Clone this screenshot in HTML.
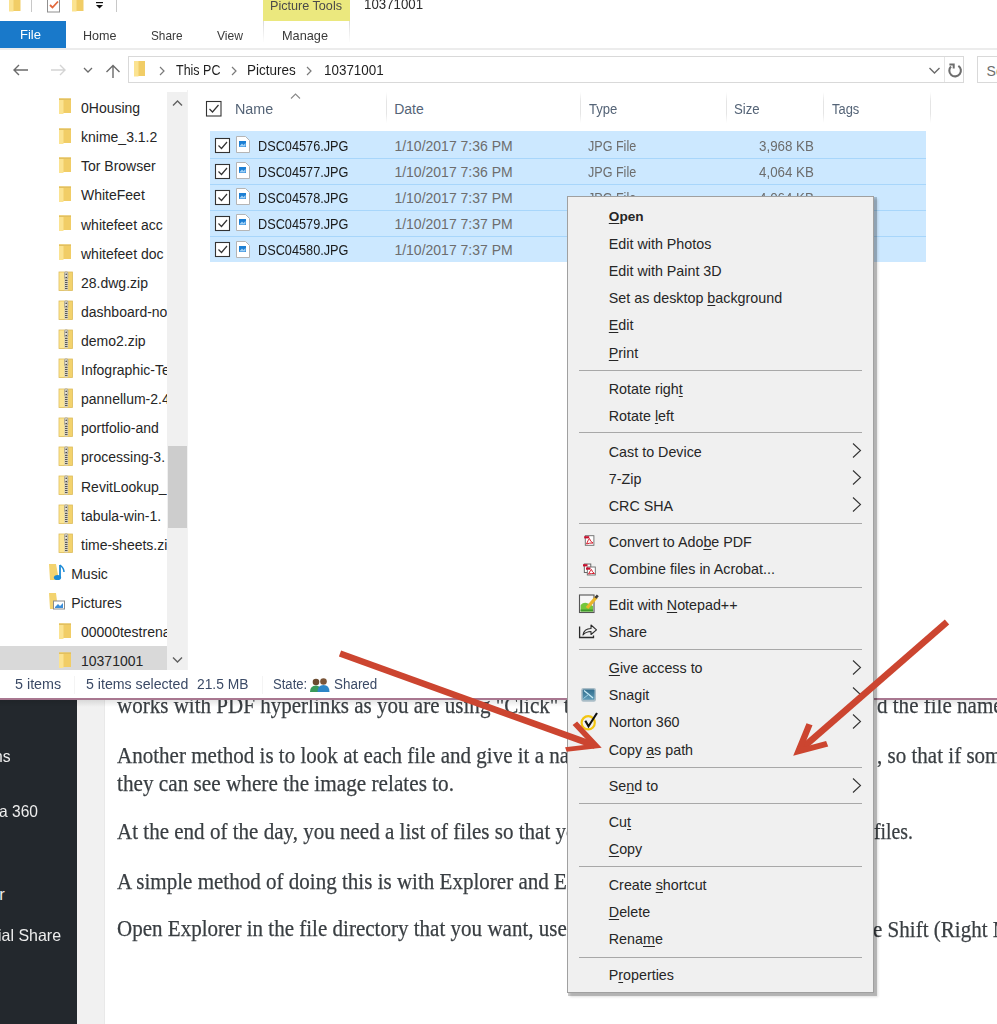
<!DOCTYPE html>
<html><head><meta charset="utf-8"><style>
html,body{margin:0;padding:0;width:997px;height:1024px;overflow:hidden;background:#fff;}
body{position:relative;font-family:"Liberation Sans", sans-serif;}
.r{position:absolute;display:block;}
.t{position:absolute;white-space:nowrap;}
u{text-decoration:underline;text-underline-offset:2px;text-decoration-thickness:1px;}
</style></head><body>
<div class="r" style="left:77px;top:690px;width:28px;height:334px;background:#f1f1f1;"></div>
<div class="r" style="left:104px;top:690px;width:1px;height:334px;background:#e9e9e9;"></div>
<div class="r" style="left:0px;top:690px;width:77px;height:334px;background:#23282d;"></div>
<div class="t" style="left:-6.50px;top:747.73px;font-size:16.5px;line-height:16.5px;color:#eeeeee;transform:scaleX(0.9500);transform-origin:0 0;">ns</div>
<div class="t" style="left:-1.50px;top:802.53px;font-size:16.5px;line-height:16.5px;color:#eeeeee;transform:scaleX(0.9446);transform-origin:0 0;">a 360</div>
<div class="t" style="left:-0.80px;top:885.53px;font-size:16.5px;line-height:16.5px;color:#eeeeee;">r</div>
<div class="t" style="left:-2.00px;top:926.73px;font-size:16.5px;line-height:16.5px;color:#eeeeee;transform:scaleX(0.9675);transform-origin:0 0;">ial Share</div>
<div class="t" style="left:117.00px;top:694.66px;font-size:22.5px;line-height:22.5px;color:#393e42;font-family:'Liberation Serif', serif;transform:scaleX(0.9350);transform-origin:0 0;-webkit-text-stroke:0.25px #393e42;">works with PDF hyperlinks as you are using "Click" to open</div>
<div class="t" style="left:876.50px;top:694.66px;font-size:22.5px;line-height:22.5px;color:#393e42;font-family:'Liberation Serif', serif;transform:scaleX(0.9350);transform-origin:0 0;-webkit-text-stroke:0.25px #393e42;">d the file name</div>
<div class="t" style="left:117.00px;top:744.66px;font-size:22.5px;line-height:22.5px;color:#393e42;font-family:'Liberation Serif', serif;transform:scaleX(0.9350);transform-origin:0 0;-webkit-text-stroke:0.25px #393e42;">Another method is to look at each file and give it a name that</div>
<div class="t" style="left:876.90px;top:744.66px;font-size:22.5px;line-height:22.5px;color:#393e42;font-family:'Liberation Serif', serif;transform:scaleX(0.9350);transform-origin:0 0;-webkit-text-stroke:0.25px #393e42;">, so that if someone</div>
<div class="t" style="left:117.00px;top:773.26px;font-size:22.5px;line-height:22.5px;color:#393e42;font-family:'Liberation Serif', serif;transform:scaleX(0.9431);transform-origin:0 0;-webkit-text-stroke:0.25px #393e42;">they can see where the image relates to.</div>
<div class="t" style="left:117.00px;top:821.46px;font-size:22.5px;line-height:22.5px;color:#393e42;font-family:'Liberation Serif', serif;transform:scaleX(0.9350);transform-origin:0 0;-webkit-text-stroke:0.25px #393e42;">At the end of the day, you need a list of files so that you can</div>
<div class="t" style="left:874.00px;top:821.46px;font-size:22.5px;line-height:22.5px;color:#393e42;font-family:'Liberation Serif', serif;transform:scaleX(0.8791);transform-origin:0 0;-webkit-text-stroke:0.25px #393e42;">files.</div>
<div class="t" style="left:117.00px;top:871.06px;font-size:22.5px;line-height:22.5px;color:#393e42;font-family:'Liberation Serif', serif;transform:scaleX(0.9350);transform-origin:0 0;-webkit-text-stroke:0.25px #393e42;">A simple method of doing this is with Explorer and Excel.</div>
<div class="t" style="left:117.00px;top:917.76px;font-size:22.5px;line-height:22.5px;color:#393e42;font-family:'Liberation Serif', serif;transform:scaleX(0.9350);transform-origin:0 0;-webkit-text-stroke:0.25px #393e42;">Open Explorer in the file directory that you want, use Ctrl</div>
<div class="t" style="left:873.20px;top:918.56px;font-size:22.5px;line-height:22.5px;color:#393e42;font-family:'Liberation Serif', serif;transform:scaleX(0.9350);transform-origin:0 0;-webkit-text-stroke:0.25px #393e42;">e Shift (Right Mouse</div>
<div class="r" style="left:0px;top:0px;width:997px;height:698px;background:#fff;"></div>
<div class="r" style="left:0px;top:699.5px;width:997px;height:7px;background:linear-gradient(rgba(0,0,0,0.10),rgba(0,0,0,0));"></div>
<div class="r" style="left:0px;top:698px;width:997px;height:1.6px;background:#a87790;"></div>
<svg class="r" style="left:8px;top:-4px;" width="14" height="16" viewBox="0 0 14 16"><rect x="1" y="0" width="11.5" height="15" fill="#f1cd66"/><rect x="1" y="0" width="4.5" height="15.5" fill="#fbe391"/></svg>
<div class="r" style="left:31px;top:0px;width:1px;height:12px;background:#c8c8c8;"></div>
<svg class="r" style="left:46px;top:-2px;" width="16" height="16" viewBox="0 0 16 16"><rect x="1.5" y="0.5" width="12" height="13.5" fill="#fff" stroke="#8f8f8f" stroke-width="1"/><path d="M4 7 L6.5 9.5 L12 3.5" fill="none" stroke="#e2683c" stroke-width="1.8"/></svg>
<svg class="r" style="left:71px;top:-4px;" width="14" height="16" viewBox="0 0 14 16"><rect x="1" y="0" width="11.5" height="15" fill="#f1cd66"/><rect x="1" y="0" width="4.5" height="15.5" fill="#fbe391"/></svg>
<svg class="r" style="left:95px;top:1px;" width="10" height="9" viewBox="0 0 10 9"><rect x="1" y="1" width="7" height="1.2" fill="#111"/><path d="M1 4 L8 4 L4.5 7.5 Z" fill="#111"/></svg>
<div class="r" style="left:116px;top:0px;width:1px;height:12px;background:#c8c8c8;"></div>
<div class="r" style="left:263px;top:0px;width:87px;height:21px;background:#ebe87e;"></div>
<div class="t" style="left:269.50px;top:0.42px;font-size:12.5px;line-height:12.5px;color:#4a4a4a;transform:scaleX(1.0094);transform-origin:0 0;">Picture Tools</div>
<div class="t" style="left:363.50px;top:-3.25px;font-size:14px;line-height:14px;color:#2b2b2b;transform:scaleX(0.9473);transform-origin:0 0;">10371001</div>
<div class="r" style="left:0px;top:21px;width:66px;height:28px;background:#1979ca;"></div>
<div class="t" style="left:19.50px;top:29.42px;font-size:12.5px;line-height:12.5px;color:#ffffff;transform:scaleX(1.0427);transform-origin:0 0;">File</div>
<div class="t" style="left:82.70px;top:29.00px;font-size:13px;line-height:13px;color:#3a3a3a;transform:scaleX(0.9661);transform-origin:0 0;">Home</div>
<div class="t" style="left:150.90px;top:29.00px;font-size:13px;line-height:13px;color:#3a3a3a;transform:scaleX(0.9081);transform-origin:0 0;">Share</div>
<div class="t" style="left:217.00px;top:29.00px;font-size:13px;line-height:13px;color:#3a3a3a;transform:scaleX(0.9305);transform-origin:0 0;">View</div>
<div class="r" style="left:263px;top:21px;width:1px;height:22px;background:linear-gradient(#dadada,#fff);"></div>
<div class="r" style="left:349px;top:21px;width:1px;height:22px;background:linear-gradient(#dadada,#fff);"></div>
<div class="t" style="left:282.00px;top:29.00px;font-size:13px;line-height:13px;color:#3a3a3a;transform:scaleX(0.9793);transform-origin:0 0;">Manage</div>
<div class="r" style="left:0px;top:48px;width:997px;height:2px;background:#ececec;"></div>
<svg class="r" style="left:12px;top:63px;" width="18" height="14" viewBox="0 0 18 14"><path d="M2 7 L16 7 M7 2 L2 7 L7 12" fill="none" stroke="#6b6b6b" stroke-width="1.4"/></svg>
<svg class="r" style="left:49px;top:63px;" width="18" height="14" viewBox="0 0 18 14"><path d="M2 7 L16 7 M11 2 L16 7 L11 12" fill="none" stroke="#d4d4d4" stroke-width="1.4"/></svg>
<svg class="r" style="left:83px;top:67px;" width="10" height="7" viewBox="0 0 10 7"><path d="M1 1 L5 5 L9 1" fill="none" stroke="#6b6b6b" stroke-width="1.3"/></svg>
<svg class="r" style="left:105px;top:64px;" width="16" height="15" viewBox="0 0 16 15"><path d="M8 14 L8 1.5 M1.5 8 L8 1.5 L14.5 8" fill="none" stroke="#6b6b6b" stroke-width="1.4"/></svg>
<div class="r" style="left:128px;top:56px;width:836px;height:27px;background:#fff;box-sizing:border-box;border:1px solid #d9d9d9;"></div>
<div class="r" style="left:944px;top:57px;width:1px;height:25px;background:#e5e5e5;"></div>
<svg class="r" style="left:133px;top:60px;" width="14" height="17" viewBox="0 0 14 17"><rect x="1" y="1" width="11" height="15" fill="#f1cd66"/><rect x="1" y="1" width="4.5" height="15.5" fill="#fbe391"/></svg>
<svg class="r" style="left:159px;top:66px;" width="7" height="10" viewBox="0 0 7 10"><path d="M1 1 L5 5.0 L1 9" fill="none" stroke="#7a7a7a" stroke-width="1.2"/></svg>
<div class="t" style="left:175.80px;top:63.15px;font-size:14px;line-height:14px;color:#1e1e1e;transform:scaleX(0.8918);transform-origin:0 0;">This PC</div>
<svg class="r" style="left:231px;top:66px;" width="7" height="10" viewBox="0 0 7 10"><path d="M1 1 L5 5.0 L1 9" fill="none" stroke="#7a7a7a" stroke-width="1.2"/></svg>
<div class="t" style="left:247.30px;top:63.15px;font-size:14px;line-height:14px;color:#1e1e1e;transform:scaleX(0.9630);transform-origin:0 0;">Pictures</div>
<svg class="r" style="left:306px;top:66px;" width="7" height="10" viewBox="0 0 7 10"><path d="M1 1 L5 5.0 L1 9" fill="none" stroke="#7a7a7a" stroke-width="1.2"/></svg>
<div class="t" style="left:323.50px;top:63.15px;font-size:14px;line-height:14px;color:#1e1e1e;transform:scaleX(0.9585);transform-origin:0 0;">10371001</div>
<svg class="r" style="left:928px;top:66px;" width="13" height="10" viewBox="0 0 13 10"><path d="M1.5 2 L6.5 7 L11.5 2" fill="none" stroke="#6b6b6b" stroke-width="1.4"/></svg>
<svg class="r" style="left:946px;top:62px;" width="18" height="18" viewBox="0 0 18 18"><path d="M12.34 3.79 A5.8 5.8 0 1 1 5.0 4.5" fill="none" stroke="#6e6e6e" stroke-width="2.1"/><path d="M3.4 2.6 L7.7 2.6 L7.7 6.6" fill="none" stroke="#6e6e6e" stroke-width="2"/></svg>
<div class="r" style="left:977px;top:56px;width:30px;height:27px;background:#fff;box-sizing:border-box;border:1px solid #d9d9d9;"></div>
<div class="t" style="left:986.60px;top:63.65px;font-size:14px;line-height:14px;color:#6d6d6d;">Se</div>
<div class="r" style="left:0px;top:646px;width:167px;height:24px;background:#d9d9d9;"></div>
<div class="r" style="left:0;top:90px;width:167px;height:580px;overflow:hidden">
<svg class="r" style="left:58px;top:8.400000000000006px;" width="14" height="18" viewBox="0 0 14 18"><rect x="1" y="0.5" width="12" height="14.5" fill="#f1cd66"/><rect x="1" y="0.5" width="4.5" height="15.5" fill="#fbe391"/><rect x="1" y="0.5" width="12" height="1.5" fill="#e2c060"/></svg>
<div class="t" style="left:81.00px;top:11.05px;font-size:14px;line-height:14px;color:#262626;">0Housing</div>
<svg class="r" style="left:58px;top:37.52000000000001px;" width="14" height="18" viewBox="0 0 14 18"><rect x="1" y="0.5" width="12" height="14.5" fill="#f1cd66"/><rect x="1" y="0.5" width="4.5" height="15.5" fill="#fbe391"/><rect x="1" y="0.5" width="12" height="1.5" fill="#e2c060"/></svg>
<div class="t" style="left:81.00px;top:40.17px;font-size:14px;line-height:14px;color:#262626;">knime_3.1.2</div>
<svg class="r" style="left:58px;top:66.64000000000001px;" width="14" height="18" viewBox="0 0 14 18"><rect x="1" y="0.5" width="12" height="14.5" fill="#f1cd66"/><rect x="1" y="0.5" width="4.5" height="15.5" fill="#fbe391"/><rect x="1" y="0.5" width="12" height="1.5" fill="#e2c060"/></svg>
<div class="t" style="left:81.00px;top:69.29px;font-size:14px;line-height:14px;color:#262626;">Tor Browser</div>
<svg class="r" style="left:58px;top:95.75999999999999px;" width="14" height="18" viewBox="0 0 14 18"><rect x="1" y="0.5" width="12" height="14.5" fill="#f1cd66"/><rect x="1" y="0.5" width="4.5" height="15.5" fill="#fbe391"/><rect x="1" y="0.5" width="12" height="1.5" fill="#e2c060"/></svg>
<div class="t" style="left:81.00px;top:98.41px;font-size:14px;line-height:14px;color:#262626;">WhiteFeet</div>
<svg class="r" style="left:58px;top:124.88px;" width="14" height="18" viewBox="0 0 14 18"><rect x="1" y="0.5" width="12" height="14.5" fill="#f1cd66"/><rect x="1" y="0.5" width="4.5" height="15.5" fill="#fbe391"/><rect x="1" y="0.5" width="12" height="1.5" fill="#e2c060"/></svg>
<div class="t" style="left:81.00px;top:127.53px;font-size:14px;line-height:14px;color:#262626;">whitefeet acc</div>
<svg class="r" style="left:58px;top:154.0px;" width="14" height="18" viewBox="0 0 14 18"><rect x="1" y="0.5" width="12" height="14.5" fill="#f1cd66"/><rect x="1" y="0.5" width="4.5" height="15.5" fill="#fbe391"/><rect x="1" y="0.5" width="12" height="1.5" fill="#e2c060"/></svg>
<div class="t" style="left:81.00px;top:156.65px;font-size:14px;line-height:14px;color:#262626;">whitefeet doc</div>
<svg class="r" style="left:58px;top:181.12px;" width="16" height="21" viewBox="0 0 16 21"><rect x="1" y="1" width="13.5" height="18.5" fill="#f3d26c" stroke="#dcbc5c" stroke-width="0.8"/><rect x="1.5" y="1.5" width="5" height="17.5" fill="#fbe594"/><rect x="6.3" y="0.8" width="3.8" height="18.5" fill="#d8d2bf"/><rect x="6.6" y="1" width="3.2" height="7" rx="1" fill="#e8e4d6" stroke="#8a8578" stroke-width="0.6"/><circle cx="8.2" cy="3.3" r="0.8" fill="#333"/><circle cx="8.2" cy="6.5" r="0.8" fill="#333"/><path d="M7 9.5h2.5M7 11.5h2.5M7 13.5h2.5M7 15.5h2.5M7 17.5h2.5" stroke="#4a4a4a" stroke-width="0.9"/></svg>
<div class="t" style="left:81.00px;top:185.77px;font-size:14px;line-height:14px;color:#262626;">28.dwg.zip</div>
<svg class="r" style="left:58px;top:210.24px;" width="16" height="21" viewBox="0 0 16 21"><rect x="1" y="1" width="13.5" height="18.5" fill="#f3d26c" stroke="#dcbc5c" stroke-width="0.8"/><rect x="1.5" y="1.5" width="5" height="17.5" fill="#fbe594"/><rect x="6.3" y="0.8" width="3.8" height="18.5" fill="#d8d2bf"/><rect x="6.6" y="1" width="3.2" height="7" rx="1" fill="#e8e4d6" stroke="#8a8578" stroke-width="0.6"/><circle cx="8.2" cy="3.3" r="0.8" fill="#333"/><circle cx="8.2" cy="6.5" r="0.8" fill="#333"/><path d="M7 9.5h2.5M7 11.5h2.5M7 13.5h2.5M7 15.5h2.5M7 17.5h2.5" stroke="#4a4a4a" stroke-width="0.9"/></svg>
<div class="t" style="left:81.00px;top:214.89px;font-size:14px;line-height:14px;color:#262626;">dashboard-nodejs</div>
<svg class="r" style="left:58px;top:239.36px;" width="16" height="21" viewBox="0 0 16 21"><rect x="1" y="1" width="13.5" height="18.5" fill="#f3d26c" stroke="#dcbc5c" stroke-width="0.8"/><rect x="1.5" y="1.5" width="5" height="17.5" fill="#fbe594"/><rect x="6.3" y="0.8" width="3.8" height="18.5" fill="#d8d2bf"/><rect x="6.6" y="1" width="3.2" height="7" rx="1" fill="#e8e4d6" stroke="#8a8578" stroke-width="0.6"/><circle cx="8.2" cy="3.3" r="0.8" fill="#333"/><circle cx="8.2" cy="6.5" r="0.8" fill="#333"/><path d="M7 9.5h2.5M7 11.5h2.5M7 13.5h2.5M7 15.5h2.5M7 17.5h2.5" stroke="#4a4a4a" stroke-width="0.9"/></svg>
<div class="t" style="left:81.00px;top:244.01px;font-size:14px;line-height:14px;color:#262626;">demo2.zip</div>
<svg class="r" style="left:58px;top:268.48px;" width="16" height="21" viewBox="0 0 16 21"><rect x="1" y="1" width="13.5" height="18.5" fill="#f3d26c" stroke="#dcbc5c" stroke-width="0.8"/><rect x="1.5" y="1.5" width="5" height="17.5" fill="#fbe594"/><rect x="6.3" y="0.8" width="3.8" height="18.5" fill="#d8d2bf"/><rect x="6.6" y="1" width="3.2" height="7" rx="1" fill="#e8e4d6" stroke="#8a8578" stroke-width="0.6"/><circle cx="8.2" cy="3.3" r="0.8" fill="#333"/><circle cx="8.2" cy="6.5" r="0.8" fill="#333"/><path d="M7 9.5h2.5M7 11.5h2.5M7 13.5h2.5M7 15.5h2.5M7 17.5h2.5" stroke="#4a4a4a" stroke-width="0.9"/></svg>
<div class="t" style="left:81.00px;top:273.13px;font-size:14px;line-height:14px;color:#262626;">Infographic-Template</div>
<svg class="r" style="left:58px;top:297.6px;" width="16" height="21" viewBox="0 0 16 21"><rect x="1" y="1" width="13.5" height="18.5" fill="#f3d26c" stroke="#dcbc5c" stroke-width="0.8"/><rect x="1.5" y="1.5" width="5" height="17.5" fill="#fbe594"/><rect x="6.3" y="0.8" width="3.8" height="18.5" fill="#d8d2bf"/><rect x="6.6" y="1" width="3.2" height="7" rx="1" fill="#e8e4d6" stroke="#8a8578" stroke-width="0.6"/><circle cx="8.2" cy="3.3" r="0.8" fill="#333"/><circle cx="8.2" cy="6.5" r="0.8" fill="#333"/><path d="M7 9.5h2.5M7 11.5h2.5M7 13.5h2.5M7 15.5h2.5M7 17.5h2.5" stroke="#4a4a4a" stroke-width="0.9"/></svg>
<div class="t" style="left:81.00px;top:302.25px;font-size:14px;line-height:14px;color:#262626;">pannellum-2.4</div>
<svg class="r" style="left:58px;top:326.72px;" width="16" height="21" viewBox="0 0 16 21"><rect x="1" y="1" width="13.5" height="18.5" fill="#f3d26c" stroke="#dcbc5c" stroke-width="0.8"/><rect x="1.5" y="1.5" width="5" height="17.5" fill="#fbe594"/><rect x="6.3" y="0.8" width="3.8" height="18.5" fill="#d8d2bf"/><rect x="6.6" y="1" width="3.2" height="7" rx="1" fill="#e8e4d6" stroke="#8a8578" stroke-width="0.6"/><circle cx="8.2" cy="3.3" r="0.8" fill="#333"/><circle cx="8.2" cy="6.5" r="0.8" fill="#333"/><path d="M7 9.5h2.5M7 11.5h2.5M7 13.5h2.5M7 15.5h2.5M7 17.5h2.5" stroke="#4a4a4a" stroke-width="0.9"/></svg>
<div class="t" style="left:81.00px;top:331.37px;font-size:14px;line-height:14px;color:#262626;">portfolio-and</div>
<svg class="r" style="left:58px;top:355.84000000000003px;" width="16" height="21" viewBox="0 0 16 21"><rect x="1" y="1" width="13.5" height="18.5" fill="#f3d26c" stroke="#dcbc5c" stroke-width="0.8"/><rect x="1.5" y="1.5" width="5" height="17.5" fill="#fbe594"/><rect x="6.3" y="0.8" width="3.8" height="18.5" fill="#d8d2bf"/><rect x="6.6" y="1" width="3.2" height="7" rx="1" fill="#e8e4d6" stroke="#8a8578" stroke-width="0.6"/><circle cx="8.2" cy="3.3" r="0.8" fill="#333"/><circle cx="8.2" cy="6.5" r="0.8" fill="#333"/><path d="M7 9.5h2.5M7 11.5h2.5M7 13.5h2.5M7 15.5h2.5M7 17.5h2.5" stroke="#4a4a4a" stroke-width="0.9"/></svg>
<div class="t" style="left:81.00px;top:360.49px;font-size:14px;line-height:14px;color:#262626;">processing-3.</div>
<svg class="r" style="left:58px;top:384.96000000000004px;" width="16" height="21" viewBox="0 0 16 21"><rect x="1" y="1" width="13.5" height="18.5" fill="#f3d26c" stroke="#dcbc5c" stroke-width="0.8"/><rect x="1.5" y="1.5" width="5" height="17.5" fill="#fbe594"/><rect x="6.3" y="0.8" width="3.8" height="18.5" fill="#d8d2bf"/><rect x="6.6" y="1" width="3.2" height="7" rx="1" fill="#e8e4d6" stroke="#8a8578" stroke-width="0.6"/><circle cx="8.2" cy="3.3" r="0.8" fill="#333"/><circle cx="8.2" cy="6.5" r="0.8" fill="#333"/><path d="M7 9.5h2.5M7 11.5h2.5M7 13.5h2.5M7 15.5h2.5M7 17.5h2.5" stroke="#4a4a4a" stroke-width="0.9"/></svg>
<div class="t" style="left:81.00px;top:389.61px;font-size:14px;line-height:14px;color:#262626;">RevitLookup_</div>
<svg class="r" style="left:58px;top:414.08000000000004px;" width="16" height="21" viewBox="0 0 16 21"><rect x="1" y="1" width="13.5" height="18.5" fill="#f3d26c" stroke="#dcbc5c" stroke-width="0.8"/><rect x="1.5" y="1.5" width="5" height="17.5" fill="#fbe594"/><rect x="6.3" y="0.8" width="3.8" height="18.5" fill="#d8d2bf"/><rect x="6.6" y="1" width="3.2" height="7" rx="1" fill="#e8e4d6" stroke="#8a8578" stroke-width="0.6"/><circle cx="8.2" cy="3.3" r="0.8" fill="#333"/><circle cx="8.2" cy="6.5" r="0.8" fill="#333"/><path d="M7 9.5h2.5M7 11.5h2.5M7 13.5h2.5M7 15.5h2.5M7 17.5h2.5" stroke="#4a4a4a" stroke-width="0.9"/></svg>
<div class="t" style="left:81.00px;top:418.73px;font-size:14px;line-height:14px;color:#262626;">tabula-win-1.</div>
<svg class="r" style="left:58px;top:443.20000000000005px;" width="16" height="21" viewBox="0 0 16 21"><rect x="1" y="1" width="13.5" height="18.5" fill="#f3d26c" stroke="#dcbc5c" stroke-width="0.8"/><rect x="1.5" y="1.5" width="5" height="17.5" fill="#fbe594"/><rect x="6.3" y="0.8" width="3.8" height="18.5" fill="#d8d2bf"/><rect x="6.6" y="1" width="3.2" height="7" rx="1" fill="#e8e4d6" stroke="#8a8578" stroke-width="0.6"/><circle cx="8.2" cy="3.3" r="0.8" fill="#333"/><circle cx="8.2" cy="6.5" r="0.8" fill="#333"/><path d="M7 9.5h2.5M7 11.5h2.5M7 13.5h2.5M7 15.5h2.5M7 17.5h2.5" stroke="#4a4a4a" stroke-width="0.9"/></svg>
<div class="t" style="left:81.00px;top:447.85px;font-size:14px;line-height:14px;color:#262626;">time-sheets.zip</div>
<svg class="r" style="left:48px;top:472.82000000000005px;" width="18" height="19" viewBox="0 0 18 19"><path d="M1 1 L8 1 L11 17 L2 17 Z" fill="#f3d36f"/><path d="M12 2 L12 14" stroke="#1a8ad6" stroke-width="1.8"/><ellipse cx="9.5" cy="14.5" rx="3.6" ry="2.6" fill="#1a8ad6"/><path d="M12 2 Q16 5 16 9" fill="none" stroke="#1a8ad6" stroke-width="1.5"/></svg>
<div class="t" style="left:71.20px;top:476.97px;font-size:14px;line-height:14px;color:#262626;">Music</div>
<svg class="r" style="left:48px;top:501.94000000000005px;" width="18" height="19" viewBox="0 0 18 19"><path d="M1 1 L8 1 L10 17 L2 17 Z" fill="#f3d36f"/><rect x="5.5" y="9" width="11" height="8" fill="#fff" stroke="#8c8c8c" stroke-width="1"/><path d="M7 15 L10 12 L12 14 L15 11 L15 16 L7 16Z" fill="#3d8ed8"/></svg>
<div class="t" style="left:71.20px;top:506.09px;font-size:14px;line-height:14px;color:#262626;">Pictures</div>
<svg class="r" style="left:58px;top:532.56px;" width="14" height="18" viewBox="0 0 14 18"><rect x="1" y="0.5" width="12" height="14.5" fill="#f1cd66"/><rect x="1" y="0.5" width="4.5" height="15.5" fill="#fbe391"/><rect x="1" y="0.5" width="12" height="1.5" fill="#e2c060"/></svg>
<div class="t" style="left:81.00px;top:535.21px;font-size:14px;line-height:14px;color:#262626;">00000testrename</div>
<svg class="r" style="left:58px;top:561.68px;" width="14" height="18" viewBox="0 0 14 18"><rect x="1" y="0.5" width="12" height="14.5" fill="#f1cd66"/><rect x="1" y="0.5" width="4.5" height="15.5" fill="#fbe391"/><rect x="1" y="0.5" width="12" height="1.5" fill="#e2c060"/></svg>
<div class="t" style="left:81.00px;top:564.33px;font-size:14px;line-height:14px;color:#262626;">10371001</div>
</div>
<div class="r" style="left:167px;top:92px;width:20px;height:578px;background:#f0f0f0;"></div>
<div class="r" style="left:167.5px;top:446px;width:19px;height:82px;background:#cdcdcd;"></div>
<svg class="r" style="left:172px;top:99px;" width="11" height="8" viewBox="0 0 11 8"><path d="M1 6.5 L5.5 2 L10 6.5" fill="none" stroke="#606060" stroke-width="1.4"/></svg>
<svg class="r" style="left:172px;top:656px;" width="11" height="8" viewBox="0 0 11 8"><path d="M1 1.5 L5.5 6 L10 1.5" fill="none" stroke="#606060" stroke-width="1.4"/></svg>
<div class="r" style="left:187px;top:90px;width:1px;height:580px;background:#f2f2f2;"></div>
<svg class="r" style="left:205px;top:100px;" width="18" height="18" viewBox="0 0 18 18"><rect x="1.5" y="1.5" width="14.5" height="14.5" fill="#fff" stroke="#333" stroke-width="1.1"/><path d="M4.5 9 L7.5 12 L13.5 5" fill="none" stroke="#333" stroke-width="1.2"/></svg>
<div class="t" style="left:234.60px;top:101.75px;font-size:14px;line-height:14px;color:#556477;transform:scaleX(1.0256);transform-origin:0 0;">Name</div>
<svg class="r" style="left:290px;top:92px;" width="12" height="8" viewBox="0 0 12 8"><path d="M1 6.5 L5.5 2 L10 6.5" fill="none" stroke="#8a8a8a" stroke-width="1.1"/></svg>
<div class="r" style="left:386px;top:92px;width:1px;height:31px;background:linear-gradient(#fff,#e5e5e5 30%,#e5e5e5 70%,#fff);"></div>
<div class="r" style="left:580px;top:92px;width:1px;height:31px;background:linear-gradient(#fff,#e5e5e5 30%,#e5e5e5 70%,#fff);"></div>
<div class="r" style="left:726px;top:92px;width:1px;height:31px;background:linear-gradient(#fff,#e5e5e5 30%,#e5e5e5 70%,#fff);"></div>
<div class="r" style="left:823px;top:92px;width:1px;height:31px;background:linear-gradient(#fff,#e5e5e5 30%,#e5e5e5 70%,#fff);"></div>
<div class="r" style="left:930px;top:92px;width:1px;height:31px;background:linear-gradient(#fff,#e5e5e5 30%,#e5e5e5 70%,#fff);"></div>
<div class="t" style="left:394.20px;top:101.75px;font-size:14px;line-height:14px;color:#556477;">Date</div>
<div class="t" style="left:588.90px;top:101.75px;font-size:14px;line-height:14px;color:#556477;transform:scaleX(0.9358);transform-origin:0 0;">Type</div>
<div class="t" style="left:733.70px;top:101.75px;font-size:14px;line-height:14px;color:#556477;transform:scaleX(0.9437);transform-origin:0 0;">Size</div>
<div class="t" style="left:831.60px;top:101.75px;font-size:14px;line-height:14px;color:#556477;transform:scaleX(0.9232);transform-origin:0 0;">Tags</div>
<div class="r" style="left:210px;top:131.3px;width:716px;height:131px;background:#cce8ff;"></div>
<div class="r" style="left:210px;top:158px;width:716px;height:1px;background:#a8d6fb;"></div>
<div class="r" style="left:210px;top:184px;width:716px;height:1px;background:#a8d6fb;"></div>
<div class="r" style="left:210px;top:210px;width:716px;height:1px;background:#a8d6fb;"></div>
<div class="r" style="left:210px;top:236px;width:716px;height:1px;background:#a8d6fb;"></div>
<svg class="r" style="left:214px;top:136.60000000000002px;" width="17" height="17" viewBox="0 0 17 17"><rect x="1.5" y="1.5" width="14" height="14" fill="#fff" stroke="#333" stroke-width="1.1"/><path d="M4.5 8.5 L7.5 11.5 L13 5" fill="none" stroke="#333" stroke-width="1.2"/></svg>
<svg class="r" style="left:235px;top:135px;" width="16" height="19" viewBox="0 0 16 19"><path d="M1.5 1.5 L10.5 1.5 L14.5 5.5 L14.5 17.5 L1.5 17.5 Z" fill="#fff" stroke="#b5b5b5" stroke-width="1"/><rect x="4" y="6" width="7" height="6" fill="#1c7fd4"/><path d="M4.5 11 L7 8.5 L8.5 10 L10.5 8 L10.5 11.5 L4.5 11.5Z" fill="#9fd0f5"/></svg>
<div class="t" style="left:258.00px;top:138.55px;font-size:14px;line-height:14px;color:#1a1a1a;transform:scaleX(0.9086);transform-origin:0 0;">DSC04576.JPG</div>
<div class="t" style="left:394.40px;top:138.55px;font-size:14px;line-height:14px;color:#6d6d6d;">1/10/2017 7:36 PM</div>
<div class="t" style="left:587.80px;top:138.55px;font-size:14px;line-height:14px;color:#6d6d6d;transform:scaleX(0.8980);transform-origin:0 0;">JPG File</div>
<div class="t" style="left:759.30px;top:138.55px;font-size:14px;line-height:14px;color:#6d6d6d;transform:scaleX(0.9532);transform-origin:0 0;">3,968 KB</div>
<svg class="r" style="left:214px;top:162.8px;" width="17" height="17" viewBox="0 0 17 17"><rect x="1.5" y="1.5" width="14" height="14" fill="#fff" stroke="#333" stroke-width="1.1"/><path d="M4.5 8.5 L7.5 11.5 L13 5" fill="none" stroke="#333" stroke-width="1.2"/></svg>
<svg class="r" style="left:235px;top:161px;" width="16" height="19" viewBox="0 0 16 19"><path d="M1.5 1.5 L10.5 1.5 L14.5 5.5 L14.5 17.5 L1.5 17.5 Z" fill="#fff" stroke="#b5b5b5" stroke-width="1"/><rect x="4" y="6" width="7" height="6" fill="#1c7fd4"/><path d="M4.5 11 L7 8.5 L8.5 10 L10.5 8 L10.5 11.5 L4.5 11.5Z" fill="#9fd0f5"/></svg>
<div class="t" style="left:258.00px;top:164.75px;font-size:14px;line-height:14px;color:#1a1a1a;transform:scaleX(0.9086);transform-origin:0 0;">DSC04577.JPG</div>
<div class="t" style="left:394.40px;top:164.75px;font-size:14px;line-height:14px;color:#6d6d6d;">1/10/2017 7:36 PM</div>
<div class="t" style="left:587.80px;top:164.75px;font-size:14px;line-height:14px;color:#6d6d6d;transform:scaleX(0.8980);transform-origin:0 0;">JPG File</div>
<div class="t" style="left:759.30px;top:164.75px;font-size:14px;line-height:14px;color:#6d6d6d;transform:scaleX(0.9532);transform-origin:0 0;">4,064 KB</div>
<svg class="r" style="left:214px;top:189.0px;" width="17" height="17" viewBox="0 0 17 17"><rect x="1.5" y="1.5" width="14" height="14" fill="#fff" stroke="#333" stroke-width="1.1"/><path d="M4.5 8.5 L7.5 11.5 L13 5" fill="none" stroke="#333" stroke-width="1.2"/></svg>
<svg class="r" style="left:235px;top:187px;" width="16" height="19" viewBox="0 0 16 19"><path d="M1.5 1.5 L10.5 1.5 L14.5 5.5 L14.5 17.5 L1.5 17.5 Z" fill="#fff" stroke="#b5b5b5" stroke-width="1"/><rect x="4" y="6" width="7" height="6" fill="#1c7fd4"/><path d="M4.5 11 L7 8.5 L8.5 10 L10.5 8 L10.5 11.5 L4.5 11.5Z" fill="#9fd0f5"/></svg>
<div class="t" style="left:258.00px;top:190.95px;font-size:14px;line-height:14px;color:#1a1a1a;transform:scaleX(0.9086);transform-origin:0 0;">DSC04578.JPG</div>
<div class="t" style="left:394.40px;top:190.95px;font-size:14px;line-height:14px;color:#6d6d6d;">1/10/2017 7:37 PM</div>
<div class="t" style="left:587.80px;top:190.95px;font-size:14px;line-height:14px;color:#6d6d6d;transform:scaleX(0.8980);transform-origin:0 0;">JPG File</div>
<div class="t" style="left:759.30px;top:190.95px;font-size:14px;line-height:14px;color:#6d6d6d;transform:scaleX(0.9532);transform-origin:0 0;">4,064 KB</div>
<svg class="r" style="left:214px;top:215.20000000000002px;" width="17" height="17" viewBox="0 0 17 17"><rect x="1.5" y="1.5" width="14" height="14" fill="#fff" stroke="#333" stroke-width="1.1"/><path d="M4.5 8.5 L7.5 11.5 L13 5" fill="none" stroke="#333" stroke-width="1.2"/></svg>
<svg class="r" style="left:235px;top:213px;" width="16" height="19" viewBox="0 0 16 19"><path d="M1.5 1.5 L10.5 1.5 L14.5 5.5 L14.5 17.5 L1.5 17.5 Z" fill="#fff" stroke="#b5b5b5" stroke-width="1"/><rect x="4" y="6" width="7" height="6" fill="#1c7fd4"/><path d="M4.5 11 L7 8.5 L8.5 10 L10.5 8 L10.5 11.5 L4.5 11.5Z" fill="#9fd0f5"/></svg>
<div class="t" style="left:258.00px;top:217.15px;font-size:14px;line-height:14px;color:#1a1a1a;transform:scaleX(0.9086);transform-origin:0 0;">DSC04579.JPG</div>
<div class="t" style="left:394.40px;top:217.15px;font-size:14px;line-height:14px;color:#6d6d6d;">1/10/2017 7:37 PM</div>
<div class="t" style="left:587.80px;top:217.15px;font-size:14px;line-height:14px;color:#6d6d6d;transform:scaleX(0.8980);transform-origin:0 0;">JPG File</div>
<div class="t" style="left:759.30px;top:217.15px;font-size:14px;line-height:14px;color:#6d6d6d;transform:scaleX(0.9532);transform-origin:0 0;">4,064 KB</div>
<svg class="r" style="left:214px;top:241.4px;" width="17" height="17" viewBox="0 0 17 17"><rect x="1.5" y="1.5" width="14" height="14" fill="#fff" stroke="#333" stroke-width="1.1"/><path d="M4.5 8.5 L7.5 11.5 L13 5" fill="none" stroke="#333" stroke-width="1.2"/></svg>
<svg class="r" style="left:235px;top:240px;" width="16" height="19" viewBox="0 0 16 19"><path d="M1.5 1.5 L10.5 1.5 L14.5 5.5 L14.5 17.5 L1.5 17.5 Z" fill="#fff" stroke="#b5b5b5" stroke-width="1"/><rect x="4" y="6" width="7" height="6" fill="#1c7fd4"/><path d="M4.5 11 L7 8.5 L8.5 10 L10.5 8 L10.5 11.5 L4.5 11.5Z" fill="#9fd0f5"/></svg>
<div class="t" style="left:258.00px;top:243.35px;font-size:14px;line-height:14px;color:#1a1a1a;transform:scaleX(0.9086);transform-origin:0 0;">DSC04580.JPG</div>
<div class="t" style="left:394.40px;top:243.35px;font-size:14px;line-height:14px;color:#6d6d6d;">1/10/2017 7:37 PM</div>
<div class="t" style="left:587.80px;top:243.35px;font-size:14px;line-height:14px;color:#6d6d6d;transform:scaleX(0.8980);transform-origin:0 0;">JPG File</div>
<div class="t" style="left:759.30px;top:243.35px;font-size:14px;line-height:14px;color:#6d6d6d;transform:scaleX(0.9532);transform-origin:0 0;">4,064 KB</div>
<div class="t" style="left:14.80px;top:677.15px;font-size:14px;line-height:14px;color:#3b4a66;transform:scaleX(1.0239);transform-origin:0 0;">5 items</div>
<div class="r" style="left:74px;top:676px;width:1px;height:18px;background:#f4f4f4;"></div>
<div class="t" style="left:86.30px;top:677.15px;font-size:14px;line-height:14px;color:#3b4a66;transform:scaleX(1.0113);transform-origin:0 0;">5 items selected</div>
<div class="t" style="left:196.60px;top:677.15px;font-size:14px;line-height:14px;color:#3b4a66;transform:scaleX(0.9859);transform-origin:0 0;">21.5 MB</div>
<div class="r" style="left:262px;top:676px;width:1px;height:18px;background:#f4f4f4;"></div>
<div class="t" style="left:272.80px;top:677.15px;font-size:14px;line-height:14px;color:#3b4a66;transform:scaleX(0.9350);transform-origin:0 0;">State:</div>
<svg class="r" style="left:309px;top:677px;" width="22" height="16" viewBox="0 0 22 16"><circle cx="7" cy="5" r="3.3" fill="#6b4a30"/><path d="M1 15 Q1 8.5 7 8.5 Q12 8.5 12 15Z" fill="#3a9a5a"/><circle cx="14.5" cy="4.5" r="3.3" fill="#7a5538"/><path d="M8.5 15 Q8.5 8 14.5 8 Q20.5 8 20.5 15Z" fill="#2d86c7"/></svg>
<div class="t" style="left:333.80px;top:677.15px;font-size:14px;line-height:14px;color:#3b4a66;transform:scaleX(0.9592);transform-origin:0 0;">Shared</div>
<div class="r" style="left:570px;top:199px;width:308px;height:798px;background:rgba(0,0,0,0.12);filter:blur(1px)"></div>
<div class="r" style="left:568px;top:197px;width:308.5px;height:798.5px;background:rgba(0,0,0,0.2);filter:blur(0.7px)"></div>
<div class="r" style="left:567px;top:196px;width:307px;height:797px;background:#f0f0f0;box-sizing:border-box;border:1px solid #a0a0a0"></div>
<div class="t" style="left:608.80px;top:210.19px;font-size:13.6px;line-height:13.6px;color:#262626;font-weight:bold;"><u>O</u>pen</div>
<div class="t" style="left:608.80px;top:236.80px;font-size:14.3px;line-height:14.3px;color:#262626;">Edit with Photos</div>
<div class="t" style="left:608.80px;top:263.70px;font-size:14.3px;line-height:14.3px;color:#262626;">Edit with Paint 3D</div>
<div class="t" style="left:608.80px;top:290.90px;font-size:14.3px;line-height:14.3px;color:#262626;">Set as desktop <u>b</u>ackground</div>
<div class="t" style="left:608.80px;top:318.10px;font-size:14.3px;line-height:14.3px;color:#262626;"><u>E</u>dit</div>
<div class="t" style="left:608.80px;top:345.50px;font-size:14.3px;line-height:14.3px;color:#262626;"><u>P</u>rint</div>
<div class="r" style="left:579px;top:370px;width:283px;height:1px;background:#a8a8a8;"></div>
<div class="t" style="left:608.80px;top:381.60px;font-size:14.3px;line-height:14.3px;color:#262626;">Rotate righ<u>t</u></div>
<div class="t" style="left:608.80px;top:408.50px;font-size:14.3px;line-height:14.3px;color:#262626;">Rotate <u>l</u>eft</div>
<div class="r" style="left:579px;top:432px;width:283px;height:1px;background:#a8a8a8;"></div>
<div class="t" style="left:608.80px;top:444.60px;font-size:14.3px;line-height:14.3px;color:#262626;">Cast to Device</div>
<svg class="r" style="left:851px;top:442px;" width="12" height="18" viewBox="0 0 12 18"><path d="M2 1.5 L9.5 8.5 L2 15.5" fill="none" stroke="#333" stroke-width="1.1"/></svg>
<div class="t" style="left:608.80px;top:471.70px;font-size:14.3px;line-height:14.3px;color:#262626;">7-Zip</div>
<svg class="r" style="left:851px;top:469px;" width="12" height="18" viewBox="0 0 12 18"><path d="M2 1.5 L9.5 8.5 L2 15.5" fill="none" stroke="#333" stroke-width="1.1"/></svg>
<div class="t" style="left:608.80px;top:498.70px;font-size:14.3px;line-height:14.3px;color:#262626;">CRC SHA</div>
<svg class="r" style="left:851px;top:496px;" width="12" height="18" viewBox="0 0 12 18"><path d="M2 1.5 L9.5 8.5 L2 15.5" fill="none" stroke="#333" stroke-width="1.1"/></svg>
<div class="r" style="left:579px;top:523px;width:283px;height:1px;background:#a8a8a8;"></div>
<div class="t" style="left:608.80px;top:534.70px;font-size:14.3px;line-height:14.3px;color:#262626;">Convert to Ado<u>b</u>e PDF</div>
<svg class="r" style="left:583px;top:534px;" width="13" height="13" viewBox="0 0 13 13"><rect x="2.3" y="1.7" width="8.6" height="9.6" fill="#fff" stroke="#6a6a6a" stroke-width="0.9"/><rect x="1.2" y="2.2" width="5" height="2.2" fill="#c8102e"/><path d="M3.5 10 Q5.5 5 6.5 4.5 Q7 7.5 10 9 Q6.5 8.8 3.5 10Z" fill="none" stroke="#d62030" stroke-width="1"/></svg>
<div class="t" style="left:608.80px;top:562.20px;font-size:14.3px;line-height:14.3px;color:#262626;">Combine files in Acrobat...</div>
<svg class="r" style="left:582px;top:562px;" width="15" height="14" viewBox="0 0 15 14"><rect x="2.3" y="2" width="6.5" height="8.5" fill="#fff" stroke="#5a5a5a" stroke-width="0.9"/><rect x="5.3" y="5" width="8" height="8" fill="#fff" stroke="#6a6a6a" stroke-width="0.9"/><rect x="1" y="2.2" width="4.5" height="2.2" fill="#c8102e"/><rect x="4" y="5.5" width="4.5" height="2.2" fill="#c8102e"/><path d="M6.5 12 Q8.5 8 9.5 7.5 Q10 10 12.5 11.5 Q9.5 11.3 6.5 12Z" fill="none" stroke="#d62030" stroke-width="1"/></svg>
<div class="r" style="left:579px;top:587px;width:283px;height:1px;background:#a8a8a8;"></div>
<div class="t" style="left:608.80px;top:598.20px;font-size:14.3px;line-height:14.3px;color:#262626;">Edit with <u>N</u>otepad++</div>
<svg class="r" style="left:578px;top:593px;" width="22" height="21" viewBox="0 0 22 21"><rect x="1.5" y="2" width="14.5" height="17.5" fill="#f7f7f7" stroke="#555" stroke-width="1.1"/><path d="M2.6 18.4 L2.6 12 Q6 8.5 10 10.5 L15 13 L15 18.4 Z" fill="#74c63c"/><path d="M2.6 18.4 L15 18.4 L15 16.5 L2.6 16.5Z" fill="#3e9a2a"/><path d="M9 15 L18.5 4" stroke="#eab52a" stroke-width="3.4"/><path d="M17.5 5 L19.8 2.3" stroke="#3a3a3a" stroke-width="2.6"/></svg>
<div class="t" style="left:608.80px;top:624.90px;font-size:14.3px;line-height:14.3px;color:#262626;">Share</div>
<svg class="r" style="left:578px;top:622px;" width="20" height="17" viewBox="0 0 20 17"><path d="M1.6 4.5 L1.6 15.5 L15.5 15.5 L15.5 13.5" fill="none" stroke="#2a2a2a" stroke-width="1.3"/><path d="M5 13 Q6 6.5 13 6.5 L13 3 L18.5 7.8 L13 12.5 L13 9.5 Q8 9.5 5 13Z" fill="none" stroke="#2a2a2a" stroke-width="1.1" stroke-linejoin="round"/></svg>
<div class="r" style="left:579px;top:649px;width:283px;height:1px;background:#a8a8a8;"></div>
<div class="t" style="left:608.80px;top:661.30px;font-size:14.3px;line-height:14.3px;color:#262626;"><u>G</u>ive access to</div>
<svg class="r" style="left:851px;top:659px;" width="12" height="18" viewBox="0 0 12 18"><path d="M2 1.5 L9.5 8.5 L2 15.5" fill="none" stroke="#333" stroke-width="1.1"/></svg>
<div class="t" style="left:608.80px;top:688.20px;font-size:14.3px;line-height:14.3px;color:#262626;">Snagit</div>
<svg class="r" style="left:851px;top:686px;" width="12" height="18" viewBox="0 0 12 18"><path d="M2 1.5 L9.5 8.5 L2 15.5" fill="none" stroke="#333" stroke-width="1.1"/></svg>
<svg class="r" style="left:580px;top:687px;" width="17" height="16" viewBox="0 0 17 16"><defs><linearGradient id="sg" x1="0" y1="0" x2="0" y2="1"><stop offset="0" stop-color="#2f6c8c"/><stop offset="1" stop-color="#5f9cb8"/></linearGradient></defs><rect x="1.2" y="1" width="14.8" height="13.8" rx="2.2" fill="#a9bcc6"/><rect x="2.7" y="2.4" width="11.8" height="10.4" rx="1" fill="url(#sg)"/><path d="M4 3.5 L13 11" stroke="#c9ecf8" stroke-width="1.2"/><path d="M3.5 11.5 L8.5 7.5" stroke="#9fd2e6" stroke-width="1"/></svg>
<div class="t" style="left:608.80px;top:715.40px;font-size:14.3px;line-height:14.3px;color:#262626;">Norton 360</div>
<svg class="r" style="left:851px;top:713px;" width="12" height="18" viewBox="0 0 12 18"><path d="M2 1.5 L9.5 8.5 L2 15.5" fill="none" stroke="#333" stroke-width="1.1"/></svg>
<svg class="r" style="left:579px;top:710px;" width="20" height="21" viewBox="0 0 20 21"><circle cx="9.2" cy="12.8" r="6.6" fill="none" stroke="#f2c511" stroke-width="2.2"/><path d="M6.3 10.7 L9.5 16.3 L18 3" fill="none" stroke="#111" stroke-width="2.1" stroke-linejoin="miter"/></svg>
<div class="t" style="left:608.80px;top:742.50px;font-size:14.3px;line-height:14.3px;color:#262626;">Copy <u>a</u>s path</div>
<div class="r" style="left:579px;top:767px;width:283px;height:1px;background:#a8a8a8;"></div>
<div class="t" style="left:608.80px;top:778.90px;font-size:14.3px;line-height:14.3px;color:#262626;">Se<u>n</u>d to</div>
<svg class="r" style="left:851px;top:777px;" width="12" height="18" viewBox="0 0 12 18"><path d="M2 1.5 L9.5 8.5 L2 15.5" fill="none" stroke="#333" stroke-width="1.1"/></svg>
<div class="r" style="left:579px;top:803px;width:283px;height:1px;background:#a8a8a8;"></div>
<div class="t" style="left:608.80px;top:815.20px;font-size:14.3px;line-height:14.3px;color:#262626;">Cu<u>t</u></div>
<div class="t" style="left:608.80px;top:842.30px;font-size:14.3px;line-height:14.3px;color:#262626;"><u>C</u>opy</div>
<div class="r" style="left:579px;top:866px;width:283px;height:1px;background:#a8a8a8;"></div>
<div class="t" style="left:608.80px;top:877.60px;font-size:14.3px;line-height:14.3px;color:#262626;">Create <u>s</u>hortcut</div>
<div class="t" style="left:608.80px;top:904.90px;font-size:14.3px;line-height:14.3px;color:#262626;"><u>D</u>elete</div>
<div class="t" style="left:608.80px;top:931.70px;font-size:14.3px;line-height:14.3px;color:#262626;">Rena<u>m</u>e</div>
<div class="r" style="left:579px;top:957px;width:283px;height:1px;background:#a8a8a8;"></div>
<div class="t" style="left:608.80px;top:967.50px;font-size:14.3px;line-height:14.3px;color:#262626;">P<u>r</u>operties</div>
<svg class="r" style="left:0;top:0" width="997" height="1024"><line x1="340" y1="653.5" x2="595.1" y2="745.7" stroke="#cc4530" stroke-width="6.6"/><polygon points="577.1,721.6 601.7,747.7 566.6,751.7 565.1,747.2 590.7,744.3 572.6,725.1" fill="#cc4530"/><line x1="947" y1="622" x2="799.5" y2="750.4" stroke="#cc4530" stroke-width="6.6"/><polygon points="806.5,723.3 793.2,755.8 828.2,746.5 826.1,740.9 803.7,746.9 812.5,725.3" fill="#cc4530"/></svg>
</body></html>
